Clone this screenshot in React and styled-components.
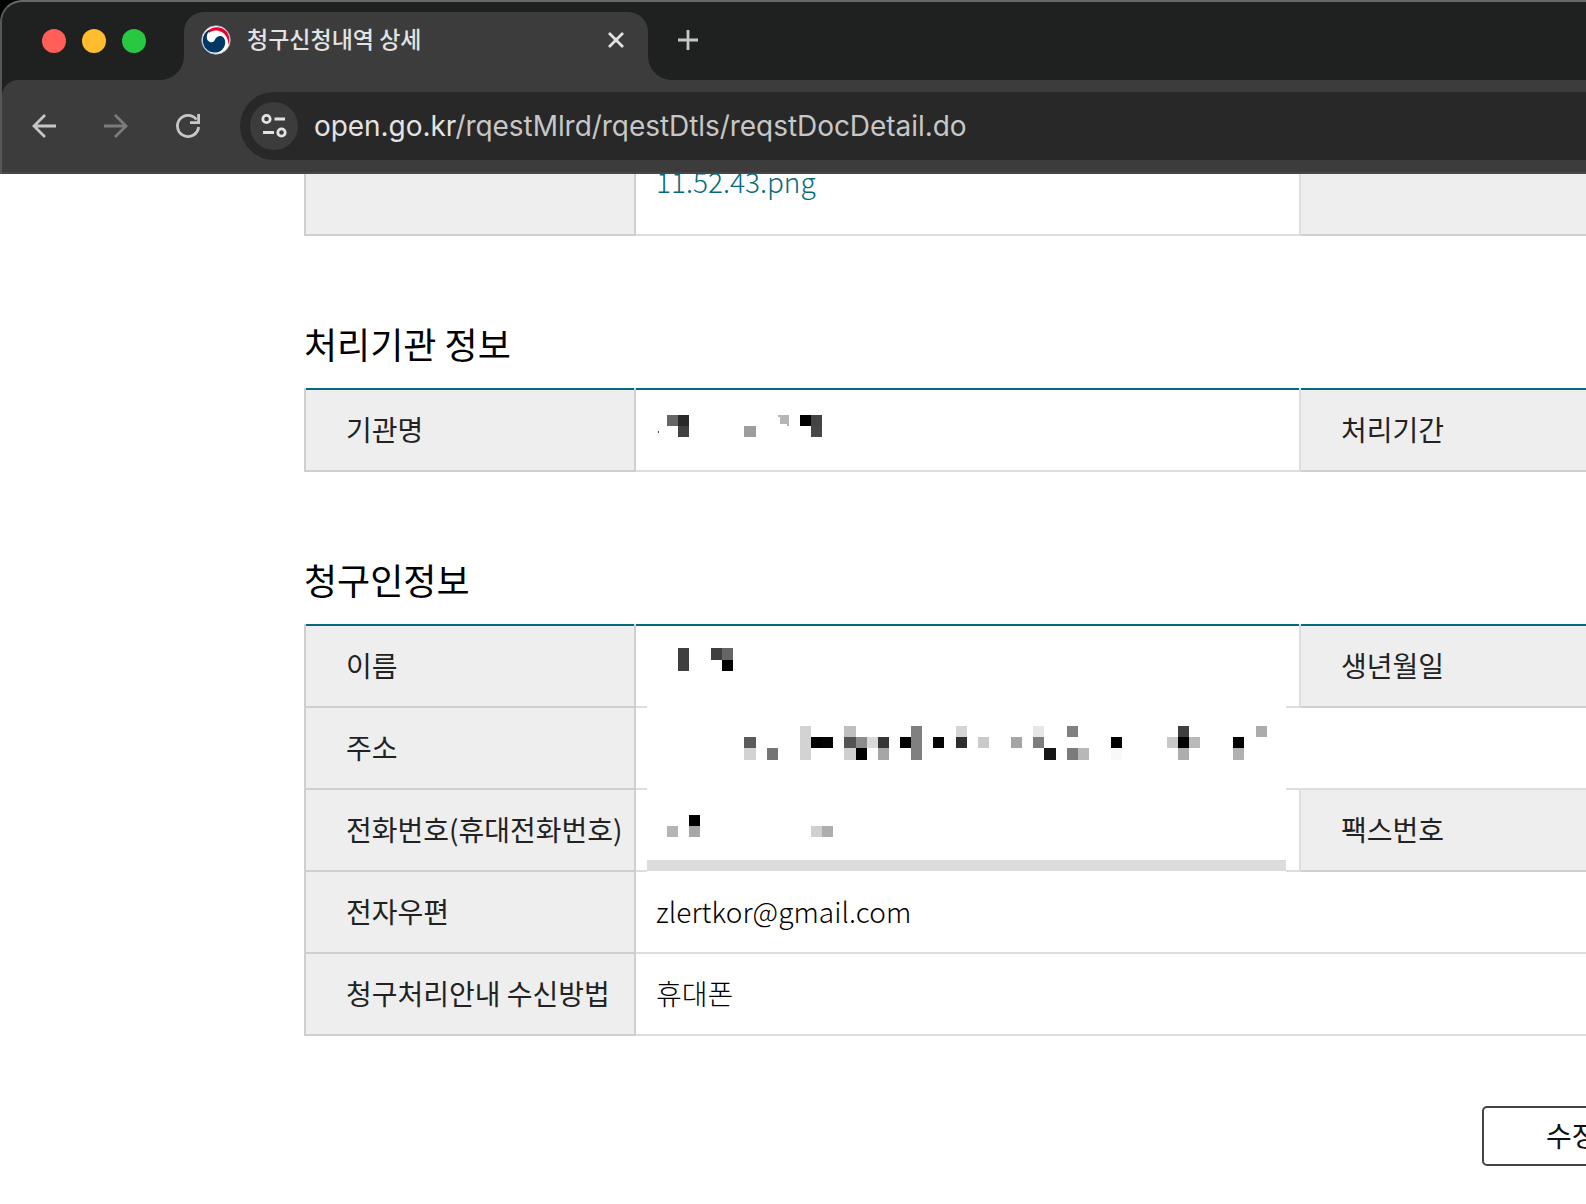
import React from 'react';
import styled, { createGlobalStyle } from 'styled-components';

const KR = '"Noto Sans CJK KR", "Noto Sans", sans-serif';

const GlobalStyle = createGlobalStyle`
  * { box-sizing: border-box; }
  html, body { margin: 0; background: #fff; }
  body { width: 1586px; height: 1204px; overflow: hidden; font-family: ${KR}; }
`;

const Screen = styled.div`
  width: 1586px;
  height: 1204px;
  overflow: hidden;
  background: #fff;
`;

const Chrome = styled.header`
  height: 174px;
  background: #000;
`;

const ChromeFrame = styled.div`
  height: 174px;
  border-top: 2px solid #666a69;
  border-left: 2px solid #565857;
  border-top-left-radius: 22px;
  background: #1f2120;
  overflow: hidden;
`;

const TabStrip = styled.div`
  display: flex;
  align-items: flex-start;
  height: 78px;
  padding-left: 40px;
`;

const Lights = styled.div`
  display: flex;
  gap: 16px;
  padding-top: 27px;
  width: 118px;
`;

const Light = styled.span`
  width: 24px;
  height: 24px;
  flex: none;
  border-radius: 50%;
  background: ${(p) => p.$color};
`;

const TabCurve = styled.span`
  width: 24px;
  height: 24px;
  flex: none;
  align-self: flex-end;
  background: radial-gradient(circle at ${(p) => (p.$side === 'left' ? '0 0' : '100% 0')}, transparent 23.5px, #3c3c3c 24.5px);
`;

const Tab = styled.div`
  display: flex;
  align-items: center;
  width: 464px;
  height: 68px;
  margin-top: 10px;
  padding: 0 22px 12px 17px;
  border-radius: 20px 20px 0 0;
  background: #3c3c3c;
`;

const TabTitle = styled.span`
  flex: 1;
  margin-left: 16px;
  padding-bottom: 4px;
  font-size: 23px;
  font-weight: 500;
  line-height: 34px;
  color: #e3e3e3;
  white-space: nowrap;
`;

const NewTab = styled.div`
  height: 60px;
  padding: 26px 0 0 4px;
`;

const Toolbar = styled.div`
  display: flex;
  align-items: flex-start;
  height: 94px;
  padding: 12px 0 0 26px;
  border-top-left-radius: 16px;
  border-bottom: 2px solid #484648;
  background: #3c3c3c;
`;

const NavIcons = styled.div`
  display: flex;
  gap: 36px;
  width: 212px;
  padding-top: 16px;
`;

const Omnibox = styled.div`
  display: flex;
  align-items: center;
  flex: 1;
  height: 68px;
  padding-left: 10px;
  border-radius: 34px 0 0 34px;
  background: #282828;
`;

const SiteInfo = styled.span`
  width: 48px;
  height: 48px;
  flex: none;
  border-radius: 50%;
  background: #3c3c3c;
`;

const Url = styled.span`
  margin-left: 16px;
  font-family: Inter, "Liberation Sans", sans-serif;
  font-size: 28px;
  line-height: 40px;
  letter-spacing: -0.05px;
  color: #c7c7c7;
  white-space: nowrap;
`;

const Host = styled.span`
  color: #e3e3e3;
`;

const Page = styled.main`
  position: relative;
  height: 1030px;
  padding-left: 304px;
  overflow: hidden;
`;

const Table = styled.div`
  border-left: 2px solid #cfcfcf;
`;

const Row = styled.div`
  display: flex;
  height: ${(p) => p.$height || 82}px;
`;

const topLine = (p) => p.$top && `
  background-image: linear-gradient(#046a7c, #046a7c);
  background-size: 100% 2px;
  background-repeat: no-repeat;
  padding-top: 2px;
`;

const Label = styled.div`
  display: flex;
  align-items: center;
  flex: ${(p) => (p.$last ? '1' : 'none')};
  width: ${(p) => (p.$last ? 'auto' : '330px')};
  padding-left: 40px;
  padding-bottom: 2px;
  border-right: ${(p) => (p.$last ? '0' : '2px')} solid #cfcfcf;
  border-bottom: 2px solid #cfcfcf;
  background-color: #eee;
  font-size: 28px;
  line-height: 40px;
  color: #222;
  white-space: nowrap;
  ${topLine}
`;

const Value = styled.div`
  display: flex;
  align-items: center;
  flex: ${(p) => (p.$wide ? '1' : 'none')};
  width: ${(p) => (p.$wide ? 'auto' : '665px')};
  padding-left: 20px;
  padding-bottom: 2px;
  border-right: ${(p) => (p.$wide ? '0' : '2px')} solid #ddd;
  border-bottom: 2px solid #ddd;
  font-size: 28px;
  font-weight: 300;
  line-height: 40px;
  color: #000;
  white-space: nowrap;
  ${topLine}
`;

const Email = styled.span`
  letter-spacing: 0.08px;
`;

const FileLink = styled.a`
  margin-bottom: 44px;
  color: #046a7c;
`;

const Heading = styled.h2`
  height: 152px;
  margin: 0;
  padding-top: 81px;
  font-size: 36px;
  font-weight: 400;
  line-height: 52px;
  color: #000;
`;

const Actions = styled.div`
  display: flex;
  padding: 70px 0 0 1178px;
`;

const EditButton = styled.button`
  flex: none;
  width: 180px;
  height: 60px;
  padding: 0 0 2px 62px;
  border: 2px solid #444;
  border-radius: 5px;
  background: #fff;
  font-family: ${KR};
  font-size: 28px;
  line-height: 40px;
  text-align: left;
  color: #111;
`;

const Mosaic = styled.svg`
  position: absolute;
  left: 0;
  top: 0;
`;

/* x, y, width, height, fill */
const cells = [
  [658, 431, 1, 2, '#444'],
  [667, 415, 11, 11, '#666'], [678, 415, 11, 11, '#2a2a2a'], [678, 426, 11, 11, '#414141'],
  [744, 426, 12, 11, '#9d9d9d'],
  [778, 415, 11, 2, '#b5b5b5'], [780, 417, 9, 7, '#b5b5b5'], [787, 424, 2, 2, '#b5b5b5'],
  [800, 415, 11, 11, '#000'], [811, 415, 11, 11, '#444'], [811, 426, 11, 11, '#474747'],
  [678, 648, 11, 23, '#3f3f3f'], [711, 648, 11, 12, '#3f3f3f'], [722, 648, 11, 12, '#656565'], [722, 660, 11, 11, '#000'],
  [744, 737, 12, 11, '#5b5b5b'], [744, 748, 12, 12, '#d3d3d3'], [767, 748, 11, 12, '#757575'],
  [800, 726, 11, 34, '#d3d3d3'], [811, 737, 11, 11, '#000'], [822, 737, 11, 11, '#050505'],
  [844, 726, 12, 11, '#bfbfbf'], [844, 737, 12, 11, '#535353'], [844, 748, 12, 12, '#cfcfcf'],
  [856, 737, 11, 11, '#8b8b8b'], [856, 748, 11, 12, '#000'], [867, 737, 11, 11, '#d9d9d9'],
  [878, 737, 11, 11, '#363636'], [878, 748, 11, 12, '#a6a6a6'], [900, 737, 11, 11, '#000'],
  [911, 726, 11, 34, '#808080'], [933, 737, 11, 11, '#050505'],
  [956, 726, 11, 11, '#d5d5d5'], [956, 737, 11, 11, '#2e2e2e'], [978, 737, 11, 11, '#cacaca'],
  [1011, 737, 11, 11, '#a5a5a5'], [1033, 726, 11, 11, '#e6e6e6'], [1033, 737, 11, 11, '#7d7d7d'],
  [1044, 748, 12, 12, '#161616'], [1067, 726, 11, 11, '#808080'], [1067, 748, 11, 12, '#7b7b7b'],
  [1078, 748, 11, 12, '#b8b8b8'], [1111, 737, 11, 11, '#000'], [1111, 748, 11, 12, '#f9f9f9'],
  [1167, 737, 11, 11, '#c8c8c8'], [1178, 726, 11, 11, '#3f3f3f'], [1178, 737, 11, 11, '#000'],
  [1178, 748, 11, 12, '#aeaeae'], [1189, 737, 11, 11, '#b9b9b9'],
  [1233, 737, 11, 11, '#000'], [1233, 748, 11, 12, '#b1b1b1'], [1256, 726, 11, 11, '#acacac'],
  [667, 826, 11, 11, '#b5b5b5'], [689, 815, 11, 11, '#000'], [689, 826, 11, 11, '#a7a7a7'],
  [811, 826, 11, 11, '#d0d0d0'], [822, 826, 11, 11, '#aeaeae'],
  [647, 860, 639, 11, '#dcdcdc'],
];

function Redaction() {
  return (
    <Mosaic width="1586" height="1030" viewBox="0 174 1586 1030" shapeRendering="crispEdges">
      <rect x="647" y="637" width="639" height="235" fill="#fff" />
      {cells.map(([x, y, w, h, fill], i) => (
        <rect key={i} x={x} y={y} width={w} height={h} fill={fill} />
      ))}
    </Mosaic>
  );
}

const Icon = styled.svg`
  display: block;
  flex: none;
  fill: none;
  stroke: ${(p) => p.$color || '#c7c7c7'};
  stroke-width: ${(p) => p.$weight || 2.8};
`;

function Favicon() {
  return (
    <Icon width="30" height="30" viewBox="0 0 30 30" $color="none">
      <circle cx="15" cy="15" r="14.3" fill="#fff" stroke="#9aa3ad" strokeWidth="0.8" />
      <path d="M7 5.500C12 1 20 1 24.500 5.500C28.500 9.500 29.300 15 27.500 20C27.500 14 24.500 7.500 18 6C13.500 5 10 6 8 8Z" fill="#e6002d" />
      <path d="M7 5.200C1 9.500 0.300 17.500 4.300 23C8.500 28.500 16.500 29 20.800 25C24.800 21.500 25.200 15.500 22.500 12.500C20 10 16.300 10.800 14.600 13.500C13.400 15.600 12.800 17.300 10.600 17.300C7.600 17.300 5.800 14.800 5.800 12C5.800 9.500 6.800 7.500 9 5.800Z" fill="#003764" />
    </Icon>
  );
}

export default function App() {
  return (
    <>
      <GlobalStyle />
      <Screen>
        <Chrome>
          <ChromeFrame>
            <TabStrip>
              <Lights>
                <Light $color="#ff5f57" />
                <Light $color="#febc2e" />
                <Light $color="#28c840" />
              </Lights>
              <TabCurve $side="left" />
              <Tab>
                <Favicon />
                <TabTitle>청구신청내역 상세</TabTitle>
                <Icon width="20" height="20" viewBox="0 0 20 20" $color="#e3e3e3">
                  <path d="M3 3L17 17M17 3L3 17" />
                </Icon>
              </Tab>
              <TabCurve $side="right" />
              <NewTab>
                <Icon width="24" height="24" viewBox="0 0 24 24">
                  <path d="M12 2V22M2 12H22" />
                </Icon>
              </NewTab>
            </TabStrip>
            <Toolbar>
              <NavIcons>
                <Icon width="36" height="36" viewBox="0 0 36 36">
                  <path d="M28 18H6M17 7L6 18L17 29" />
                </Icon>
                <Icon width="36" height="36" viewBox="0 0 36 36" $color="#7c7c7c">
                  <path d="M4 18H26M15 7L26 18L15 29" />
                </Icon>
                <Icon width="36" height="36" viewBox="0 0 36 36">
                  <path d="M26.600 19A10.600 10.600 0 1 1 24.500 11.500" />
                  <path d="M26.600 6V14.600H18" />
                </Icon>
              </NavIcons>
              <Omnibox>
                <SiteInfo>
                  <Icon width="48" height="48" viewBox="0 0 48 48" $color="#e3e3e3">
                    <circle cx="16.500" cy="17" r="3.700" />
                    <path d="M24.500 17H35M13 30.500H24" />
                    <circle cx="31.500" cy="30.500" r="3.700" />
                  </Icon>
                </SiteInfo>
                <Url><Host>open.go.kr</Host>/rqestMlrd/rqestDtls/reqstDocDetail.do</Url>
              </Omnibox>
            </Toolbar>
          </ChromeFrame>
        </Chrome>
        <Page>
          <Table>
            <Row $height={62}>
              <Label />
              <Value><FileLink>11.52.43.png</FileLink></Value>
              <Label $last />
            </Row>
          </Table>
          <Heading>처리기관 정보</Heading>
          <Table>
            <Row $height={84}>
              <Label $top>기관명</Label>
              <Value $top />
              <Label $top $last>처리기간</Label>
            </Row>
          </Table>
          <Heading>청구인정보</Heading>
          <Table>
            <Row $height={84}>
              <Label $top>이름</Label>
              <Value $top />
              <Label $top $last>생년월일</Label>
            </Row>
            <Row>
              <Label>주소</Label>
              <Value $wide />
            </Row>
            <Row>
              <Label>전화번호(휴대전화번호)</Label>
              <Value />
              <Label $last>팩스번호</Label>
            </Row>
            <Row>
              <Label>전자우편</Label>
              <Value $wide><Email>zlertkor@gmail.com</Email></Value>
            </Row>
            <Row>
              <Label>청구처리안내 수신방법</Label>
              <Value $wide>휴대폰</Value>
            </Row>
          </Table>
          <Actions>
            <EditButton>수정</EditButton>
          </Actions>
          <Redaction />
        </Page>
      </Screen>
    </>
  );
}
